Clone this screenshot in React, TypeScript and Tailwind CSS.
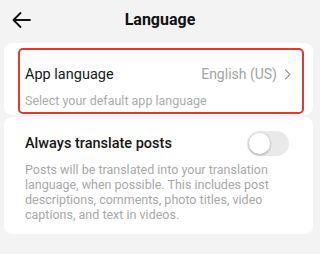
function Toggle() {
  return (
    <div className="w-[42px] h-[25px] rounded-full bg-[#e9e9e9] p-[2px] flex items-center shrink-0">
      <div className="w-[21px] h-[21px] rounded-full bg-white shadow-[0_1px_3px_rgba(0,0,0,0.3)]" />
    </div>
  );
}

export default function App() {
  return (
    <div
      className="w-[320px] h-[254px] bg-[#f3f3f3] overflow-hidden"
      style={{ fontFamily: "Roboto, 'Liberation Sans', sans-serif" }}
    >
      <div className="relative h-[40px] flex items-center justify-center">
        <svg
          className="absolute left-[12px] top-[11px]"
          width="19"
          height="18"
          viewBox="0 0 19 18"
          fill="none"
          stroke="#111"
          strokeWidth="1.8"
          strokeLinecap="round"
          strokeLinejoin="round"
        >
          <path d="M18 9H1.5M8.5 2L1.5 9l7 7" />
        </svg>
        <h1 className="text-[16px] font-bold text-[#111]">Language</h1>
      </div>

      <div className="ml-[4px] mr-[7px] mt-[3px] bg-white rounded-[8px] pl-[14px] pr-[9px] pt-[5px] pb-[1px]">
        <div className="border-2 border-[#e8372f] rounded-[5px] h-[66px] pl-[5px] pr-[10px] pt-[14px]">
          <div className="flex items-center justify-between">
            <span className="text-[14.5px] text-[#161616]">App language</span>
            <span className="flex items-center text-[14px] text-[#a3a3a3]">
              English (US)
              <svg
                className="ml-[7px]"
                width="8"
                height="11"
                viewBox="0 0 8 11"
                fill="none"
                stroke="#a0a0a0"
                strokeWidth="1.3"
                strokeLinecap="round"
                strokeLinejoin="round"
              >
                <path d="M1.5 1L6 5.5L1.5 10" />
              </svg>
            </span>
          </div>
          <div className="mt-[6px] text-[12.5px] text-[#ababab]">Select your default app language</div>
        </div>
      </div>

      <div className="ml-[4px] mr-[7px] mt-[2px] h-[117px] bg-white rounded-[8px] pl-[21px] pr-[24px] pt-[14px]">
        <div className="flex items-center justify-between">
          <span className="text-[14.5px] font-medium text-[#161616]">Always translate posts</span>
          <Toggle />
        </div>
        <p className="mt-[6px] text-[12.5px] leading-[15px] text-[#a8a8a8] pr-[6px]">
          Posts will be translated into your translation language, when possible. This includes post
          descriptions, comments, photo titles, video captions, and text in videos.
        </p>
      </div>
    </div>
  );
}
